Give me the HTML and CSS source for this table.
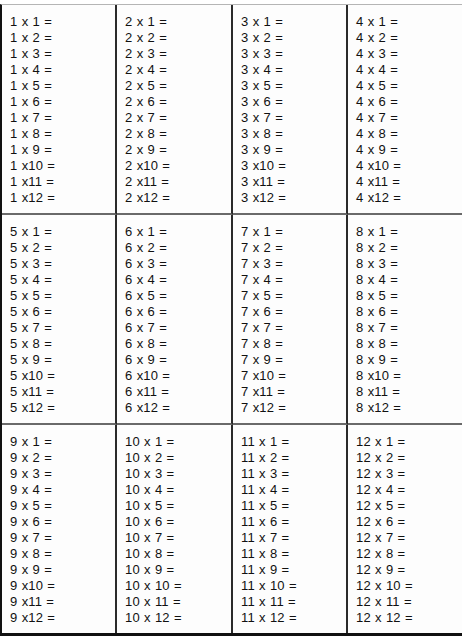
FILE: index.html
```html
<!DOCTYPE html>
<html>
<head>
<meta charset="utf-8">
<link rel="stylesheet" href="styles.css">
</head>
<body>
<div class="sheet" id="sheet"></div>
<script src="app.js"></script>
</body>
</html>
```
FILE: styles.css
```css
html, body {
  margin: 0;
  padding: 0;
  background: #ffffff;
  overflow: hidden;
}
.sheet {
  margin-top: 4px;
  width: 466px;
  display: grid;
  grid-template-columns: 115px 116px 115px 118px;
  grid-template-rows: 210px 210px 208px;
  border-top: 1px solid #b5b5b5;
  border-left: 2px solid #111;
  border-bottom: 3px solid #111;
  background: #fdfdfd;
  font-family: "Liberation Sans", Arial, sans-serif;
  font-size: 13px;
  line-height: 16px;
  letter-spacing: 0.15px;
  word-spacing: 0.5px;
  color: #111;
}
.cell {
  padding: 9px 0 0 8px;
  border-right: 2px solid #2a2a2a;
  border-bottom: 2px solid #6a6a6a;
}
.cell.last-row {
  border-bottom: none;
}
.line {
  white-space: pre;
}
```
FILE: app.js
```js
const sheet = document.getElementById('sheet');
for (let r = 0; r < 3; r++) {
  for (let c = 0; c < 4; c++) {
    const n = r * 4 + c + 1;
    const cell = document.createElement('div');
    cell.className = 'cell' + (r === 2 ? ' last-row' : '');
    for (let i = 1; i <= 12; i++) {
      const d = document.createElement('div');
      d.className = 'line';
      if (n < 10) {
        d.textContent = i < 10 ? `${n} x ${i} =` : `${n} x${i} =`;
      } else {
        d.textContent = `${n} x ${i} =`;
      }
      cell.appendChild(d);
    }
    sheet.appendChild(cell);
  }
}
```
